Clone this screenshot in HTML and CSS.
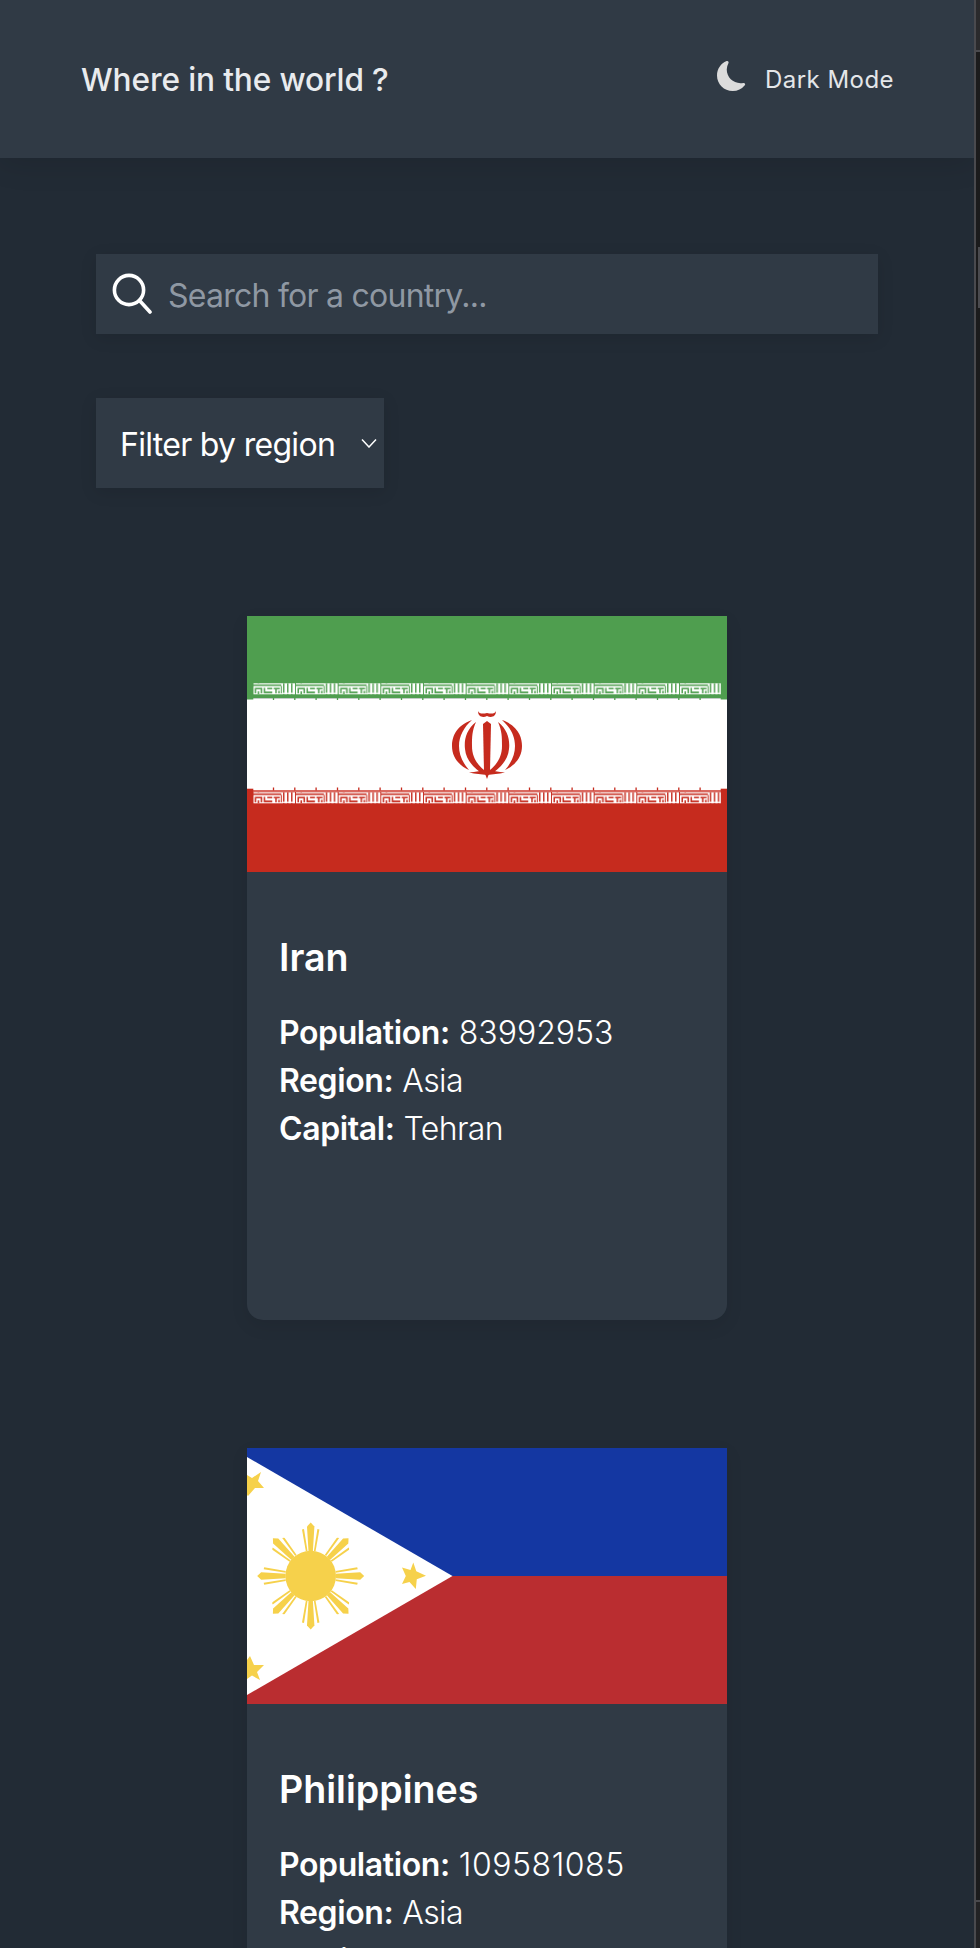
FILE: index.html
```html
<!DOCTYPE html>
<html lang="en">
<head>
<meta charset="utf-8">
<title>Where in the world ?</title>
<link rel="stylesheet" href="styles.css">
</head>
<body>
<div class="window">
<div class="app">
  <header class="topbar">
    <h1 class="brand">Where in the world ?</h1>
    <div class="mode">
      <svg class="moon" viewBox="0 0 16 16"><path d="M6 .278a.768.768 0 0 1 .08.858 7.208 7.208 0 0 0-.878 3.46c0 4.021 3.278 7.277 7.318 7.277.527 0 1.04-.055 1.533-.16a.787.787 0 0 1 .81.316.733.733 0 0 1-.031.893A8.349 8.349 0 0 1 8.344 16C3.734 16 0 12.286 0 7.71 0 4.266 2.114 1.312 5.124.06A.752.752 0 0 1 6 .278z"/></svg>
      <span>Dark Mode</span>
    </div>
  </header>
  <main class="content">
    <div class="controls">
      <label class="search">
        <svg class="search-icon" viewBox="0 0 40 42"><circle cx="17" cy="17" r="14.600"/><path d="M27.500 27.500 38 39"/></svg>
        <input class="search-input" type="text" placeholder="Search for a country...">
      </label>
      <div class="filter">
        <span>Filter by region</span>
        <svg class="chevron" viewBox="0 0 16 10"><path d="M1 1.500 8 9l7-7.500"/></svg>
      </div>
    </div>
    <section class="cards">
      <article class="card">
        <svg class="flag" viewBox="0 0 480 256">
          <defs>
            <g id="tile">
              <rect class="ir-w" width="41.700" height="11"/>
              <path class="tile-hole" d="M0 1.300H28V2.800H0ZM1.500 4.500H9V10H7.500V6H3V10H1.500ZM4.500 8H6V11H4.500ZM10.500 4.500H12V8.200H19V10H10.500ZM14 4.500H19V6H14ZM20.500 4.500H26.500V6H23.500V10H22V6H20.500ZM25 7.500H26.500V10H25ZM27.600 2.800H28.600V10H27.600ZM29.800 0H31.200V9.500H29.800ZM33.800 0H35.200V9.500H33.800ZM37.800 0H39.200V9.500H37.800Z"/>
            </g>
            <pattern id="kufic-top" x="6.300" y="67.300" width="42.667" height="11" patternUnits="userSpaceOnUse"><use href="#tile" class="tile-green"/></pattern>
            <pattern id="kufic-bottom" x="6.300" y="176.300" width="42.667" height="11" patternUnits="userSpaceOnUse"><use href="#tile" class="tile-red"/></pattern>
          </defs>
          <rect class="ir-g" width="480" height="82.300"/>
          <rect class="ir-w" y="82.300" width="480" height="91.700"/>
          <rect class="ir-r" y="174" width="480" height="82"/>
          <rect x="6.300" y="67.300" width="467.500" height="11" fill="url(#kufic-top)"/>
          <rect x="6.300" y="176.300" width="467.500" height="11" fill="url(#kufic-bottom)"/>
          <rect class="ir-pale" x="6.300" y="174.500" width="467.500" height="1"/>
          <rect class="ir-g" y="82" width="6.300" height="1.500"/>
          <rect class="ir-g" x="473.700" y="82" width="6.300" height="1.500"/>
          <rect class="ir-r" y="172.700" width="6.300" height="1.500"/>
          <rect class="ir-r" x="473.700" y="172.700" width="6.300" height="1.500"/>
          <path class="ir-tick-g" d="M26.500 82v2M47.800 82v2M69.100 82v2M90.500 82v2M111.800 82v2M133.100 82v2M154.500 82v2M175.800 82v2M197.100 82v2M218.500 82v2M239.800 82v2M261.100 82v2M282.500 82v2M303.800 82v2M325.100 82v2M346.500 82v2M367.800 82v2M389.100 82v2M410.500 82v2M431.800 82v2M453.100 82v2"/>
          <path class="ir-tick-r" d="M26.500 171.500v3M47.800 171.500v3M69.100 171.500v3M90.500 171.500v3M111.800 171.500v3M133.100 171.500v3M154.500 171.500v3M175.800 171.500v3M197.100 171.500v3M218.500 171.500v3M239.800 171.500v3M261.100 171.500v3M282.500 171.500v3M303.800 171.500v3M325.100 171.500v3M346.500 171.500v3M367.800 171.500v3M389.100 171.500v3M410.500 171.500v3M431.800 171.500v3M453.100 171.500v3"/>
          <g class="ir-emblem">
            <path d="M225 104C208 110 205 122 205 130C205 142 213 150 222 154C215 146 212 138 212 130C212 120 217 111 225 104Z"/>
            <path d="M255 104C272 110 275 122 275 130C275 142 267 150 258 154C265 146 268 138 268 130C268 120 263 111 255 104Z"/>
            <path d="M229 106C219 114 217 124 218 133C219 146 230 154 236 158L237 154C230 148 225 141 225 130C225 121 225 115 229 106Z"/>
            <path d="M251 106C261 114 263 124 262 133C261 146 250 154 244 158L243 154C250 148 255 141 255 130C255 121 255 115 251 106Z"/>
            <path d="M236 108L240 105 244 108 243 155 240 163 237 155Z"/>
            <path d="M222 156.500C229 156 234 155 240 153 246 155 251 156 258 156.500 251 158 246 158 240 159 234 158 229 158 222 156.500Z"/>
            <path d="M231 95C231 101 236 102 240 100 244 102 249 101 249 95 248 98 244 98 240 97 236 98 232 98 231 95Z"/>
          </g>
        </svg>
        <div class="card-body">
          <h2 class="card-title">Iran</h2>
          <p class="fact"><b>Population:</b> 83992953</p>
          <p class="fact"><b>Region:</b> <span class="word">Asia</span></p>
          <p class="fact"><b>Capital:</b> <span class="word">Tehran</span></p>
        </div>
      </article>
      <article class="card">
        <svg class="flag" viewBox="0 0 480 256">
          <defs>
            <g id="ray">
              <path d="M63.700 74.500 60 78.500 61.500 103H65.900L67.400 78.500Z"/>
              <path d="M55 81.500 57 81 60.500 103H58.800Z"/>
              <path d="M72.400 81.500 70.400 81 66.900 103H68.600Z"/>
            </g>
            <clipPath id="sun-box"><rect x="25.300" y="89.700" width="76.800" height="76.600"/></clipPath>
          </defs>
          <rect class="ph-b" width="480" height="128"/>
          <rect class="ph-r" y="128" width="480" height="128"/>
          <path class="ph-w" d="M0 9 205.500 128 0 247Z"/>
          <g class="ph-y">
            <circle cx="63.700" cy="128" r="25.300"/>
            <use href="#ray"/>
            <use href="#ray" transform="rotate(90 63.700 128)"/>
            <use href="#ray" transform="rotate(180 63.700 128)"/>
            <use href="#ray" transform="rotate(270 63.700 128)"/>
            <g clip-path="url(#sun-box)">
              <use href="#ray" transform="rotate(45 63.700 128)"/>
              <use href="#ray" transform="rotate(135 63.700 128)"/>
              <use href="#ray" transform="rotate(225 63.700 128)"/>
              <use href="#ray" transform="rotate(315 63.700 128)"/>
            </g>
            <path d="M166.300 114.500 169.300 123.300 179 127.800 169.800 131.300 168.800 141 162.500 134 155 136 158.800 128 155 119.500 163.500 122Z"/>
            <path d="M14 24 11 33 17 40 8 40 1 48 0 47V27L5 30Z"/>
            <path d="M3 208 7 217 17 217 10 224 13 232 5 227.500 0 231V212Z"/>
          </g>
        </svg>
        <div class="card-body">
          <h2 class="card-title">Philippines</h2>
          <p class="fact"><b>Population:</b> <span class="num-loose">109581085</span></p>
          <p class="fact"><b>Region:</b> <span class="word">Asia</span></p>
          <p class="fact"><b>Capital:</b> <span class="word">Manila</span></p>
        </div>
      </article>
    </section>
  </main>
</div>
<aside class="rail">
  <div class="rail-top"></div>
  <div class="rail-mid"><div class="rail-thumb"></div></div>
  <div class="rail-end"></div>
</aside>
</div>
</body>
</html>
```
FILE: styles.css
```css
* { box-sizing: border-box; }
html, body { margin: 0; height: 100%; overflow: hidden; background: #222b35; }
body { font-family: Inter, "Liberation Sans", sans-serif; color: #fff; }
.window { display: flex; height: 1948px; overflow: hidden; }
.app { width: 974px; flex: none; height: 1948px; overflow: hidden; background: #222b35; }
.topbar {
  height: 158px; padding: 0 80px 0 81px; display: flex; align-items: center; justify-content: space-between;
  background: #303a45; box-shadow: 0 4px 30px rgba(0,0,0,.12); position: relative;
}
.brand { margin: 0; font-size: 31.600px; font-weight: 500; letter-spacing: -.12px; color: #e9ebee; }
.mode { display: flex; align-items: center; gap: 18px; font-size: 24px; letter-spacing: .45px; color: #e4e6e9; }
.moon { width: 30px; height: 30px; fill: #dcdcdc; margin-top: -6px; }
.content { padding: 96px 96px 0; }
.controls { display: flex; flex-direction: column; gap: 64px; align-items: flex-start; }
.search {
  width: 782px; height: 80px; display: flex; align-items: center; gap: 16px; padding: 0 0 0 16px;
  background: #303a45; box-shadow: 0 4px 16px rgba(0,0,0,.1);
}
.search-icon { width: 40px; height: 42px; fill: none; stroke: #fff; stroke-width: 3.6; stroke-linecap: round; flex: none; }
.search-input {
  flex: 1; border: 0; outline: 0; background: transparent; padding: 2px 0 0; font: 400 32px Inter, "Liberation Sans", sans-serif; letter-spacing: -.75px; color: #fff;
}
.search-input::placeholder { color: #8f98a3; opacity: 1; }
.filter {
  width: 288px; height: 90px; display: flex; align-items: center; justify-content: space-between; padding: 0 7px 0 24px;
  background: #303a45; box-shadow: 0 4px 16px rgba(0,0,0,.1); font-size: 32px; letter-spacing: -.7px; color: #fff;
}
.filter span { padding-top: 2px; }
.chevron { width: 16px; height: 10px; fill: none; stroke: #fff; stroke-width: 1.5; }
.cards { margin-top: 128px; display: flex; flex-direction: column; align-items: center; gap: 128px; }
.card {
  width: 480px; height: 704px; flex: none; background: #303a45; border-radius: 0 0 16px 16px;
  box-shadow: 0 6px 18px rgba(0,0,0,.08);
}
.flag { display: block; width: 480px; height: 256px; }
.card-body { padding: 62px 32px 0; }
.card-title { margin: 0 0 27px; font-size: 37.600px; line-height: 48px; font-weight: 600; }
.fact { margin: 0; font-size: 32px; line-height: 48px; font-weight: 300; }
.fact b { font-weight: 600; letter-spacing: -.4px; }
.num-loose { letter-spacing: .55px; }
.word { letter-spacing: -.6px; }
.ir-g { fill: #4f9e4f; }
.ir-w { fill: #fff; }
.ir-r { fill: #c62b1e; }
.ir-pale { fill: #eda69f; }
.ir-emblem { fill: #c62b1e; }
.ir-tick-g { stroke: #4f9e4f; stroke-width: 1.3; fill: none; }
.ir-tick-r { stroke: #c62b1e; stroke-width: 1.3; fill: none; }
.tile-green { --hole: #4f9e4f; }
.tile-red { --hole: #c62b1e; }
.tile-hole { fill: var(--hole); }
.ph-b { fill: #1437a2; }
.ph-r { fill: #ba2d30; }
.ph-w { fill: #fff; }
.ph-y { fill: #f6d14b; }
.rail { width: 6px; flex: none; height: 1948px; display: flex; flex-direction: column; border-left: 2px solid #4a4a4e; background: #1b1b1c; }
.rail-top { height: 52px; flex: none; background: #2a2a2c; border-bottom: 2px solid #4a4a4e; }
.rail-mid { flex: 1; position: relative; }
.rail-thumb { position: absolute; left: 2px; right: 0; top: 195px; height: 61px; background: #4a4a4e; }
.rail-end { height: 48px; flex: none; border-top: 2px solid #4a4a4e; background: #222224; }
```
